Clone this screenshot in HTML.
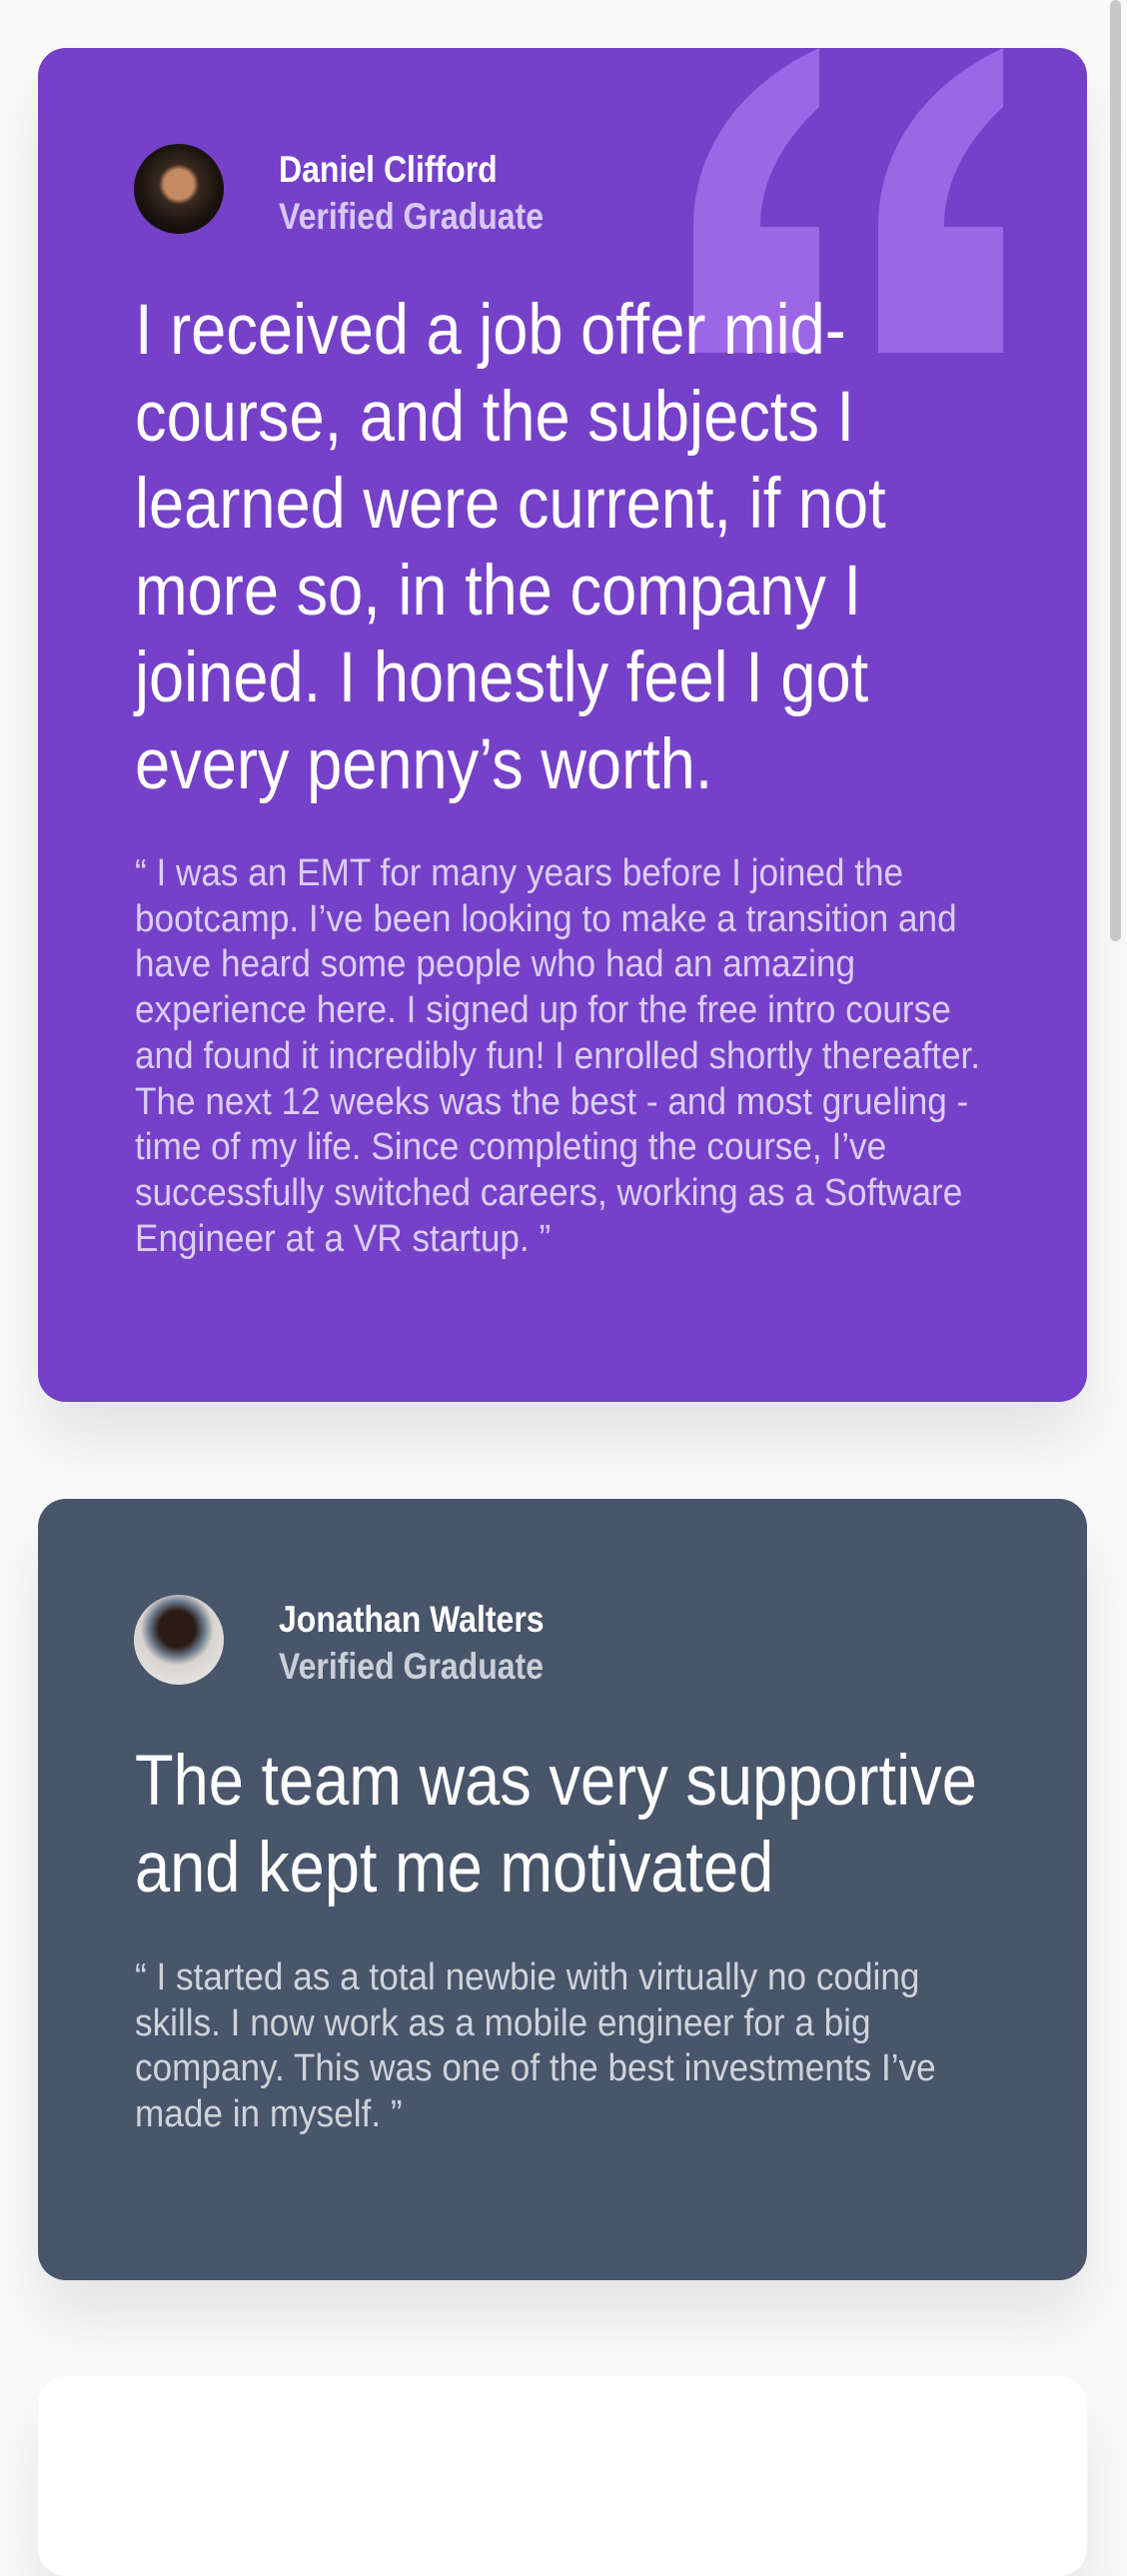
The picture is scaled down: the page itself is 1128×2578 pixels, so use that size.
<!DOCTYPE html>
<html><head><meta charset="utf-8">
<style>
html,body{margin:0;padding:0;}
body{width:1128px;height:2436px;background:#fafafa;position:relative;overflow:hidden;font-family:"Liberation Sans Narrow","Liberation Sans",sans-serif;}
.card{position:absolute;left:38px;width:1050px;border-radius:28px;box-shadow:0 40px 60px rgba(0,0,0,0.09);overflow:hidden;}
.abs{position:absolute;white-space:nowrap;transform-origin:0 0;}
.name{left:279px;font-size:37px;line-height:47px;font-weight:bold;color:#fff;transform:scaleX(0.865);}
.ver{font-weight:bold;}
.h{left:135px;font-size:71px;line-height:87px;color:#fff;transform:scaleX(0.89);}
.b{left:135px;font-size:38px;line-height:45.7px;transform:scaleX(0.925);}
.av{position:absolute;left:134px;width:90px;height:90px;border-radius:50%;overflow:hidden;}
</style></head><body>
<div class="card" style="top:48px;height:1355px;background:#7541c8;"></div>
<div class="card" style="top:1500px;height:782px;background:#48556a;"></div>
<div class="card" style="top:2378px;height:200px;background:#fff;"></div>

<svg class="abs" style="left:0;top:0" width="1128" height="400">
<path d="M820 48 L820 107 C790 135 761 175 761 227 L820 227 L820 353 L694 353 L694 227 C694 150 740 85 820 48 Z" fill="#9b67e6"/>
<path d="M1004 48 L1004 107 C974 135 945 175 945 227 L1004 227 L1004 353 L879 353 L879 227 C879 150 925 85 1004 48 Z" fill="#9b67e6"/>
</svg>

<div class="av" style="top:144px;background:radial-gradient(circle at 50% 45%,#c58a62 0 22%,#3a2a20 30%,#1a120e 60%,#0b0806 100%);"></div>
<div class="abs name" style="top:146px;">Daniel Clifford<br><span class="ver" style="color:#d8c8f4">Verified Graduate</span></div>
<div class="abs h" style="top:287px;">I received a job offer mid-<br>course, and the subjects I<br>learned were current, if not<br>more so, in the company I<br>joined. I honestly feel I got<br>every penny’s worth.</div>
<div class="abs b" style="top:852px;color:#dccdf5;">“ I was an EMT for many years before I joined the<br>bootcamp. I’ve been looking to make a transition and<br>have heard some people who had an amazing<br>experience here. I signed up for the free intro course<br>and found it incredibly fun! I enrolled shortly thereafter.<br>The next 12 weeks was the best - and most grueling -<br>time of my life. Since completing the course, I’ve<br>successfully switched careers, working as a Software<br>Engineer at a VR startup. ”</div>

<div class="av" style="top:1596px;background:radial-gradient(circle at 48% 38%,#2a1c14 0 25%,#6b7a8c 38%,#d8d4cf 50%,#eeeeee 100%);"></div>
<div class="abs name" style="top:1597px;">Jonathan Walters<br><span class="ver" style="color:#cbd0d8">Verified Graduate</span></div>
<div class="abs h" style="top:1739px;">The team was very supportive<br>and kept me motivated</div>
<div class="abs b" style="top:1957px;color:#cfd3da;">“ I started as a total newbie with virtually no coding<br>skills. I now work as a mobile engineer for a big<br>company. This was one of the best investments I’ve<br>made in myself. ”</div>

<div style="position:absolute;left:1111px;top:0;width:11px;height:942px;border-radius:6px;background:#c8c8c8;"></div>
</body></html>
